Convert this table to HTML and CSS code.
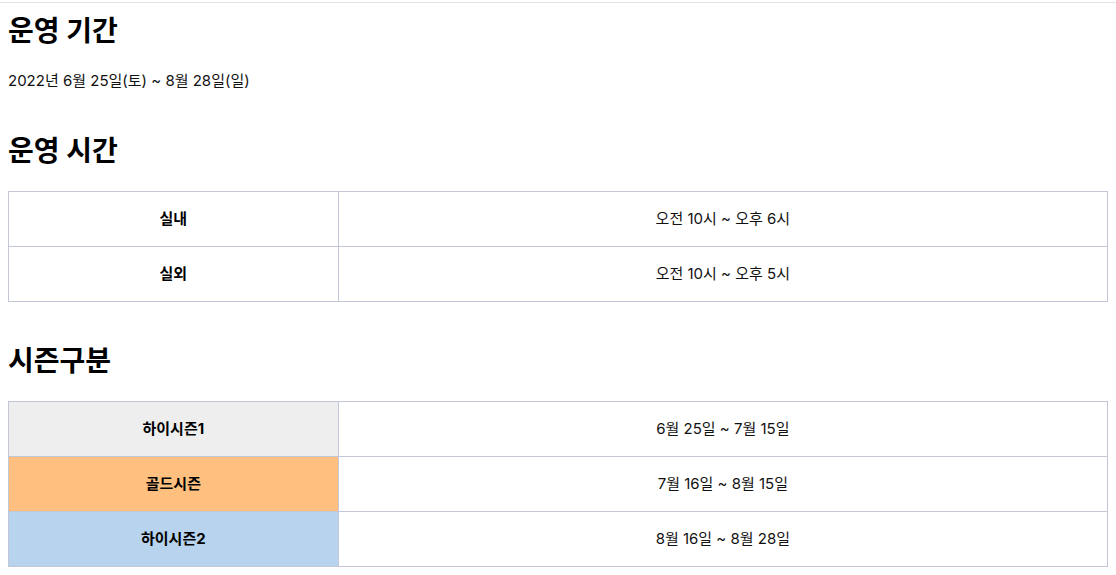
FILE: index.html
```html
<!DOCTYPE html>
<html lang="ko">
<head>
<meta charset="utf-8">
<link rel="stylesheet" href="styles.css">
</head>
<body>
<div class="page">
  <h2 class="title first">운영 기간</h2>
  <p class="text">2022년 6월 25일(토) ~ 8월 28일(일)</p>

  <h2 class="title">운영 시간</h2>
  <table class="info">
    <tr><th class="label">실내</th><td class="value">오전 10시 ~ 오후 6시</td></tr>
    <tr><th class="label">실외</th><td class="value">오전 10시 ~ 오후 5시</td></tr>
  </table>

  <h2 class="title after-table">시즌구분</h2>
  <table class="info">
    <tr><th class="label high">하이시즌1</th><td class="value">6월 25일 ~ 7월 15일</td></tr>
    <tr><th class="label gold">골드시즌</th><td class="value">7월 16일 ~ 8월 15일</td></tr>
    <tr><th class="label high2">하이시즌2</th><td class="value">8월 16일 ~ 8월 28일</td></tr>
  </table>
</div>
</body>
</html>
```
FILE: styles.css
```css
html, body {
  margin: 0;
  padding: 0;
  background: #fff;
}
body {
  padding-top: 2px;
  font-family: Inter, "Noto Sans CJK KR", sans-serif;
  color: #111;
}
.page {
  border-top: 1px solid #e2e2e2;
  padding: 0 8px;
}
.title {
  font-size: 28px;
  line-height: 36px;
  font-weight: 700;
  margin: 42px 0 22px;
  color: #000;
}
.title.first {
  margin-top: 10px;
}
.title.after-table {
  margin-top: 41px;
}
.text {
  font-size: 15px;
  line-height: 20px;
  margin: 20px 0 0;
}
.info {
  width: 100%;
  border-collapse: collapse;
  font-size: 15px;
}
.info th, .info td {
  border: 1px solid #c3c6d6;
  height: 50px;
  padding: 0 0 4px;
  text-align: center;
  vertical-align: middle;
}
.label {
  width: 30%;
  font-weight: 700;
  color: #000;
}
.value {
  font-weight: 400;
}
.high { background: #eeeeee; }
.gold { background: #ffc07f; }
.high2 { background: #b8d3ee; }
```
